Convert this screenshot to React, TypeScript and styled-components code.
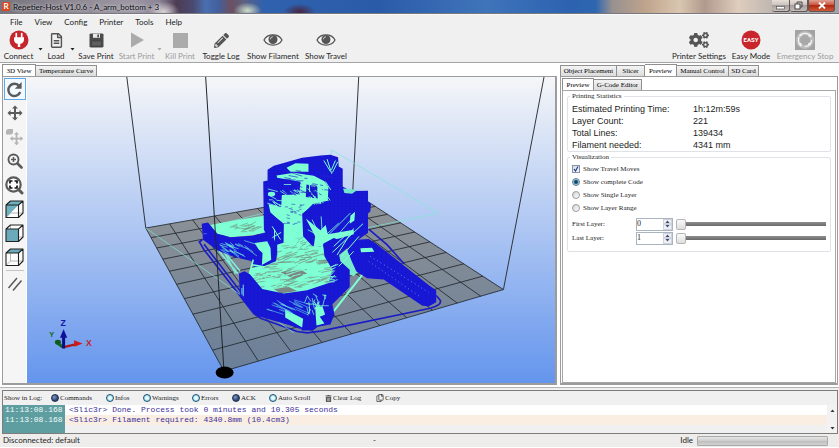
import React, { useState } from "react";
import styled, { createGlobalStyle, css } from "styled-components";
import { FaCogs, FaPencilAlt, FaRegFileAlt, FaTrashAlt, FaRegCopy } from "react-icons/fa";

const UI = `Lato, "Open Sans", sans-serif`;
const SERIF = `"Liberation Serif", serif`;

const GlobalStyle = createGlobalStyle`
  * { box-sizing: border-box; }
  body { margin: 0; background: #fff; font-family: ${UI}; font-size: 8px; line-height: 10px; color: #1c1c1c; }
  button, input { font: inherit; color: inherit; margin: 0; padding: 0; }
  button { background: none; border: 0; }
`;

const Window = styled.div`
  display: flex;
  flex-direction: column;
  min-height: 100vh;
  background: #f0f0f0;
  border-bottom: 2px solid #fff;
`;

/* ---------- title bar ---------- */

const TitleBar = styled.header`
  display: flex;
  align-items: center;
  height: 14px;
  padding-left: 2px;
  gap: 3px;
  border-bottom: 1px solid #77797f;
  background:
    radial-gradient(ellipse 14px 8px at 29.5% 80%, #d0dcc8, transparent),
    radial-gradient(ellipse 16px 8px at 35.7% 90%, #4a2440, transparent),
    radial-gradient(ellipse 16px 10px at 19.5% 90%, #d9d2d4, transparent),
    linear-gradient(90deg, #77747e 0, #8d8891 8%, #9c97a3 16%, #8b8496 19%, #4d3c54 21%, #4a4a70 23%, #4a6fb0 24.5%,
      #42609e 26%, #6b5060 27.5%, #5d6080 29%, #2f62ae 31.5%, #2a5ba8 45%, #3f74ba 58%, #2c62b0 68%, #2f66b0 71%,
      #98918f 73%, #c0a48c 77%, #d9c6b0 81%, #b09a8d 84%, #dfcdbd 88%, #b8b2ae 93%, #a3a3a8 100%);
`;

const AppBadge = styled.span`
  width: 8px;
  height: 9px;
  border-radius: 1px;
  background: #d9481f;
  color: #fff;
  font-weight: 700;
  line-height: 9px;
  text-align: center;
`;

const WindowTitle = styled.h1`
  flex: 1;
  margin: 0;
  font-size: 8px;
  font-weight: 400;
  line-height: 12px;
  color: #0b0b12;
  text-shadow: 0 0 3px #ffffffb0, 0 0 5px #ffffff80;
`;

const WindowButtons = styled.div`
  display: flex;
  align-self: flex-start;
  margin-right: 4px;
`;

const WindowButton = styled.button<{ $close?: boolean }>`
  display: flex;
  align-items: center;
  justify-content: center;
  width: ${(p) => (p.$close ? 27 : 18)}px;
  height: 12px;
  border: 1px solid #5c5658;
  border-top: 0;
  border-left-width: ${(p) => (p.$close ? 1 : 0)}px;
  border-radius: 0 0 3px 3px;
  background: ${(p) =>
    p.$close
      ? "linear-gradient(#e0a294, #c8543d 45%, #b02a14 50%, #cf5a35)"
      : "linear-gradient(#e8dfd8, #cdc3bd 45%, #a79f9d 50%, #c9bfb9)"};
`;

/* ---------- menu and toolbar ---------- */

const MenuBar = styled.nav`
  display: flex;
  align-items: center;
  height: 15px;
  padding-left: 10px;
  gap: 12px;
  border-top: 1px solid #fafafa;
`;

const MenuItem = styled.button`
  line-height: 12px;
`;

const Toolbar = styled.div`
  display: flex;
  height: 34px;
  padding: 0 4px 0 0;
  border-bottom: 1px solid #a5a5a5;
`;

const Spacer = styled.div`
  flex: 1;
`;

const Tool = styled.button<{ $w: number }>`
  display: flex;
  flex-direction: column;
  align-items: center;
  width: ${(p) => p.$w}px;
  color: #262626;
  white-space: nowrap;
  &:disabled { color: #9b9b9b; }
`;

const ToolIcon = styled.span`
  display: flex;
  align-items: center;
  justify-content: center;
  height: 22px;
  color: #555;
  button:disabled & { color: #ababab; }
`;

const ToolLabel = styled.span`
  line-height: 10px;
`;

const DropArrow = styled.button<{ $dim?: boolean }>`
  width: 6px;
  padding-top: 4px;
  color: ${(p) => (p.$dim ? "#aaa" : "#222")};
`;

/* ---------- main area ---------- */

const Main = styled.main`
  flex: 1;
  display: flex;
  gap: 3px;
  padding: 1px 1px 2px 2px;
  background: #fff;
  border-bottom: 1px solid #b4b4b4;
`;

const LeftPane = styled.section`
  flex: 2 1 0;
  display: flex;
  flex-direction: column;
  min-width: 0;
`;

const RightPane = styled.section`
  flex: 1 1 0;
  display: flex;
  flex-direction: column;
  min-width: 278px;
`;

const Tabs = styled.div`
  display: flex;
  align-items: flex-end;
  height: 12px;
`;

const Tab = styled.button<{ $on?: boolean; $w: number }>`
  width: ${(p) => p.$w}px;
  height: 11px;
  font-family: ${SERIF};
  font-size: 7px;
  line-height: 9px;
  white-space: nowrap;
  color: #000;
  border: 1px solid #8f8f8f;
  border-bottom: 0;
  background: linear-gradient(#f4f4f4, #dcdcdc);
  & + & { border-left: 0; }
  ${(p) =>
    p.$on &&
    css`
      height: 12px;
      line-height: 10px;
      background: #fff;
    `}
`;

const ViewFrame = styled.div`
  flex: 1;
  display: flex;
  min-height: 0;
  border: 1px solid #9c9c9c;
  border-width: 1px 2px 2px 1px;
`;

const SideTools = styled.div`
  display: flex;
  flex-direction: column;
  align-items: center;
  width: 24px;
  background: #f5f5f5;
  border-right: 1px solid #fff;
`;

const SideTool = styled.button<{ $on?: boolean }>`
  display: flex;
  align-items: center;
  justify-content: center;
  width: 22px;
  height: 22px;
  margin: 1px 0;
  color: #5a5a5a;
  border: 1px solid ${(p) => (p.$on ? "#62a8e8" : "transparent")};
  background: ${(p) => (p.$on ? "#f2f9ff" : "transparent")};
  &:disabled { color: #b4b4b4; }
`;

const SideRule = styled.hr`
  width: 18px;
  margin: 1px 0;
  border: 0;
  border-top: 1px solid #c4c4c4;
`;

const Viewport = styled.div`
  flex: 1;
  display: flex;
  min-width: 0;
  svg { flex: 1; min-width: 0; width: 100%; height: 100%; }
`;

const OuterPanel = styled.div`
  flex: 1;
  display: flex;
  flex-direction: column;
  padding: 1px 1px 0 1px;
  border: 1px solid #9c9c9c;
  border-bottom-width: 2px;
`;

const InnerPanel = styled.div`
  flex: 1;
  padding: 1px 4px;
  border: 1px solid #a6a6a6;
  font-family: ${SERIF};
  font-size: 7px;
`;

const Group = styled.fieldset<{ $pad?: number }>`
  margin: 0 0 1px;
  padding: 0 4px ${(p) => p.$pad ?? 0}px;
  border: 1px solid #dfe3e8;
  border-radius: 2px;
`;

const Legend = styled.legend`
  margin-left: -2px;
  padding: 0 2px;
  line-height: 9px;
`;

const Stats = styled.table`
  width: 100%;
  margin-top: 2px;
  border-collapse: collapse;
  font-family: "Liberation Sans", sans-serif;
  font-size: 9px;
  th, td { padding: 0; height: 12px; line-height: 11px; text-align: left; font-weight: 400; }
  th { width: 121px; }
`;

const Option = styled.label`
  display: flex;
  align-items: center;
  gap: 3px;
  height: 13px;
`;

const Check = styled.input`
  appearance: none;
  width: 8px;
  height: 8px;
  border: 1px solid #8a93a3;
  background: #e8edf4;
  &:checked {
    background: linear-gradient(135deg, #d5dbe6, #f4f7fb);
  }
`;

const CheckWrap = styled.span`
  display: grid;
  place-items: center;
  > * { grid-area: 1 / 1; }
  svg { pointer-events: none; }
`;

const Radio = styled.input`
  appearance: none;
  width: 8px;
  height: 8px;
  border: 1px solid #9b9b9b;
  border-radius: 50%;
  background: linear-gradient(135deg, #d2d2d2, #fff);
  &:checked {
    border-color: #5f7c90;
    background: radial-gradient(circle, #143c5c 0 1px, #3b87ab 2px, #d8e8f0 3px);
  }
`;

const Layers = styled.div`
  margin-top: 3px;
`;

const LayerRow = styled.div`
  display: flex;
  align-items: center;
  height: 14px;
`;

const LayerLabel = styled.label`
  width: 64px;
`;

const Spin = styled.span`
  display: flex;
  width: 37px;
  height: 13px;
  border: 1px solid #aab4c0;
  background: #fff;
`;

const SpinInput = styled.input`
  flex: 1;
  min-width: 0;
  border: 0;
  font-size: 8px;
  line-height: 10px;
  background: transparent;
  appearance: textfield;
  &::-webkit-inner-spin-button { appearance: none; }
`;

const SpinButtons = styled.span`
  display: flex;
  flex-direction: column;
  width: 9px;
`;

const SpinButton = styled.button`
  flex: 1;
  display: flex;
  align-items: center;
  justify-content: center;
  border: 1px solid #cfd4dc;
  background: #eef0f5;
`;

const Slider = styled.input`
  appearance: none;
  flex: 1;
  min-width: 0;
  height: 12px;
  margin-left: 3px;
  background: linear-gradient(#8e8e8e, #6a6a6a) center / 100% 4px no-repeat;
  &::-webkit-slider-thumb {
    appearance: none;
    width: 10px;
    height: 11px;
    border: 1px solid #b5b5b5;
    border-radius: 2px;
    background: linear-gradient(#fafafa, #dedede);
  }
`;

/* ---------- log and status ---------- */

const LogPanel = styled.section`
  margin: 2px 1px 0 2px;
  border: 1px solid #7d7d7d;
`;

const LogBar = styled.div`
  display: flex;
  align-items: center;
  height: 14px;
  padding-left: 1px;
  font-family: ${SERIF};
  font-size: 7px;
`;

const LogCell = styled.span<{ $w: number }>`
  width: ${(p) => p.$w}px;
  white-space: nowrap;
`;

const LogButton = styled.button<{ $w: number }>`
  display: flex;
  align-items: center;
  gap: 1px;
  width: ${(p) => p.$w}px;
  white-space: nowrap;
`;

const Dot = styled.span<{ $on?: boolean }>`
  width: 8px;
  height: 8px;
  border-radius: 50%;
  border: 1px solid ${(p) => (p.$on ? "#1b2a44" : "#1f4f6e")};
  background: ${(p) =>
    p.$on
      ? "radial-gradient(circle at 35% 35%, #7f9cc6, #2f4a7c 60%)"
      : "radial-gradient(circle, #f4feff 0 1px, #8ddcf4 3px)"};
`;

const LogBody = styled.div`
  display: flex;
`;

const LogTable = styled.table`
  flex: 1;
  border-collapse: collapse;
  font-family: "Liberation Mono", monospace;
  font-size: 8px;
  line-height: 10px;
  td { padding: 0 0 0 4px; height: 10px; color: #3c2f9a; background: #fff; }
  tr:nth-child(2) td { background: #faeee3; }
  tr:nth-child(3) td { height: 8px; background: #f0f0f0; }
  td:first-child, tr:nth-child(n) td:first-child { width: 62px; padding-left: 2px; color: #f2fbfb; background: #5f9ea0; }
`;

const ScrollTrack = styled.div`
  display: flex;
  flex-direction: column;
  justify-content: space-between;
  align-items: center;
  width: 10px;
  padding: 2px 0;
  background: #f2f2f2;
`;

const ScrollButton = styled.button`
  display: flex;
  height: 6px;
  align-items: center;
`;

const StatusBar = styled.footer`
  display: grid;
  grid-template-columns: 45fr auto 55fr;
  align-items: center;
  height: 13px;
  padding: 0 11px 0 3px;
  background: #efedec;
  line-height: 11px;
`;

const IdleBox = styled.div`
  display: flex;
  align-items: center;
  justify-content: flex-end;
  gap: 4px;
`;

const Progress = styled.div`
  width: 131px;
  height: 10px;
  border: 1px solid #a9a9a9;
  border-radius: 1px;
  background: linear-gradient(#e6e6e6, #cfcfcf 45%, #bdbdbd 50%, #d2d2d2);
`;

/* ---------- icons ---------- */

const Triangle = ({ up, color = "currentColor" }: { up?: boolean; color?: string }) => (
  <svg width="5" height="3" viewBox="0 0 5 3">
    <path d={up ? "M0.5 3h4L2.5 0.5z" : "M0.5 0h4L2.5 2.5z"} fill={color} />
  </svg>
);

const PlugIcon = () => (
  <svg width="20" height="20" viewBox="0 0 20 20">
    <circle cx="10" cy="10" r="9.5" fill="#c5262e" />
    <path d="M7.3 3.6v4M12.7 3.6v4" stroke="#fff" strokeWidth="1.7" strokeLinecap="round" />
    <path d="M5 7.2h10v2.2c0 2.6-1.6 4-3.8 4.4V17H8.8v-3.2C6.6 13.4 5 12 5 9.4z" fill="#fff" />
  </svg>
);

const FloppyIcon = () => (
  <svg width="15" height="15" viewBox="0 0 15 15">
    <path d="M1.5 0.5H13.5L14.5 1.5V13.5L13.5 14.5H1.5L0.5 13.5V1.5z" fill="#4b4b4b" />
    <path d="M4 0.8h7v4H4z" fill="#e9e9e9" />
    <path d="M8.3 1.4h1.7v2.8H8.3z" fill="#4b4b4b" />
    <path d="M2.5 8h10v5h-10z" fill="#5f5f5f" stroke="#3a3a3a" strokeWidth="0.6" />
  </svg>
);

const EyeIcon = () => (
  <svg width="20" height="14" viewBox="0 0 20 14">
    <path d="M1 7C4.5 0.2 15.5 0.2 19 7C15.5 13.8 4.5 13.8 1 7z" fill="#f4f4f4" stroke="#555" strokeWidth="1.3" />
    <circle cx="10" cy="6.5" r="4.5" fill="#555" />
    <path d="M7.4 6.3a2.7 2.7 0 0 1 2.5-2.6" fill="none" stroke="#ddd" strokeWidth="0.9" />
  </svg>
);

const EasyIcon = () => (
  <svg width="20" height="20" viewBox="0 0 20 20">
    <circle cx="10" cy="10" r="9.5" fill="#c9252c" />
    <text x="10" y="12.2" textAnchor="middle" fontFamily="Roboto, sans-serif" fontWeight="700" fontSize="6" fill="#fff">
      EASY
    </text>
  </svg>
);

const StopIcon = () => (
  <svg width="20" height="20" viewBox="0 0 20 20">
    <rect width="20" height="20" fill="#a3a3a3" />
    <circle cx="10" cy="10" r="9" fill="#bdbdbd" />
    <circle cx="10" cy="10" r="6.6" fill="none" stroke="#f4f4f4" strokeWidth="1.2" strokeDasharray="10.4 3.4" />
    <circle cx="10" cy="10" r="5" fill="#a8a8a8" />
    <path d="M14 3.2l3 2.8-3.4 1zM3 13.5l3.6-.4-.7 3.6zM3.6 5.5l3-2.5.2 3.5zM16.5 13.8l-3.4 2.6.2-3.7z" fill="#f4f4f4" />
  </svg>
);

const RotateIcon = () => (
  <svg width="17" height="17" viewBox="0 0 17 17">
    <path d="M13.3 5.2A6.1 6.1 0 1 0 14.2 11" fill="none" stroke="currentColor" strokeWidth="2.4" />
    <path d="M15.6 1v6.8H8.8z" fill="currentColor" />
  </svg>
);

const MOVE =
  "M8 0.5L11 3.5H9V7H12.5V5L15.5 8L12.5 11V9H9V12.5H11L8 15.5L5 12.5H7V9H3.5V11L0.5 8L3.5 5V7H7V3.5H5z";

const MoveIcon = () => (
  <svg width="16" height="16" viewBox="0 0 16 16">
    <path d={MOVE} fill="currentColor" />
  </svg>
);

const MoveObjectIcon = () => (
  <svg width="19" height="18" viewBox="0 0 19 18">
    <path d="M1 2.5L3 1h5v4L6.5 6.5H1z" fill="currentColor" />
    <path d={MOVE} fill="currentColor" transform="translate(4.5 3.5) scale(.88)" />
  </svg>
);

const ZoomIcon = () => (
  <svg width="16" height="16" viewBox="0 0 16 16">
    <circle cx="6.5" cy="6.5" r="5" fill="none" stroke="currentColor" strokeWidth="1.9" />
    <path d="M6.5 4v5M4 6.5h5" stroke="currentColor" strokeWidth="1.5" />
    <path d="M10.5 10.5L14.5 14.5" stroke="currentColor" strokeWidth="2.6" strokeLinecap="round" />
  </svg>
);

const FitIcon = () => (
  <svg width="19" height="19" viewBox="0 0 19 19">
    <circle cx="8.5" cy="8.5" r="7.2" fill="#fff" stroke="currentColor" strokeWidth="2.2" />
    <path d="M5 7.5V5h2.5M9.5 5H12v2.5M12 9.5V12H9.5M7.5 12H5V9.5" fill="none" stroke="#111" strokeWidth="1.7" />
    <path d="M14 14l3 3" stroke="currentColor" strokeWidth="3" strokeLinecap="round" />
  </svg>
);

const CubeIcon = ({ face }: { face: "cut" | "front" | "top" }) => (
  <svg width="19" height="19" viewBox="0 0 19 19" strokeLinejoin="round">
    <path d="M1 5L5.5 1H18V13L13.5 17.5H1z" fill="#fdfdfd" />
    <path d="M5.5 1V13H18M5.5 13L1 17.5" fill="none" stroke="#999" strokeWidth="0.7" />
    {face === "cut" && <path d="M1 5L5.5 1H18L13.5 5L1 17.5z" fill="#6fb0bf" />}
    {face === "front" && <path d="M1 5H13.5V17.5H1z" fill="#6aaabb" />}
    {face === "top" && <path d="M1 5L5.5 1H18L13.5 5z" fill="#6aaabb" />}
    <path d="M1 5H13.5V17.5H1zM1 5L5.5 1H18L13.5 5M18 1V13L13.5 17.5" fill="none" stroke="#222" strokeWidth="1.1" />
  </svg>
);

const ParallelIcon = () => (
  <svg width="16" height="16" viewBox="0 0 16 16">
    <path d="M1.5 12L10 2M6 14.5L14.5 4.5" stroke="currentColor" strokeWidth="1.5" />
  </svg>
);

/* ---------- 3D scene ---------- */

type P = [number, number];

const FRONT: P = [310, 905];
const LEFT: P = [75, 475];
const RIGHT: P = [1150, 660];
const BACK: P = [697, 366];

/* Projects a point of the unit bed onto the screen. */
const projectBed = (() => {
  const [x0, y0] = FRONT;
  const [x1, y1] = RIGHT;
  const [x2, y2] = BACK;
  const [x3, y3] = LEFT;
  const dx1 = x1 - x2, dx2 = x3 - x2, sx = x0 - x1 + x2 - x3;
  const dy1 = y1 - y2, dy2 = y3 - y2, sy = y0 - y1 + y2 - y3;
  const det = dx1 * dy2 - dx2 * dy1;
  const g = (sx * dy2 - dx2 * sy) / det;
  const h = (dx1 * sy - sx * dy1) / det;
  return (u: number, v: number): P => {
    const w = g * u + h * v + 1;
    return [
      ((x1 - x0 + g * x1) * u + (x3 - x0 + h * x3) * v + x0) / w,
      ((y1 - y0 + g * y1) * u + (y3 - y0 + h * y3) * v + y0) / w,
    ];
  };
})();

const seg = (a: P, b: P) => `M${a[0].toFixed(1)} ${a[1].toFixed(1)}L${b[0].toFixed(1)} ${b[1].toFixed(1)}`;

const gridPath = Array.from({ length: 11 }, (_, i) => i / 10)
  .map((t) => seg(projectBed(t, 0), projectBed(t, 1)) + seg(projectBed(0, t), projectBed(1, t)))
  .join("");

/* Scattered strokes inside a box, with a fixed seed so that every render is the same. */
const strokes = (seed: number, n: number, x: number, y: number, w: number, h: number, angle: number, spread: number, len: number) => {
  let s = seed;
  const rnd = () => {
    s = (s * 16807) % 2147483647;
    return s / 2147483647;
  };
  let d = "";
  for (let i = 0; i < n; i++) {
    const a = ((angle + (rnd() - 0.5) * spread) * Math.PI) / 180;
    const l = len * (0.4 + rnd());
    const px = x + rnd() * w;
    const py = y + rnd() * h;
    d += seg([px, py], [px + Math.cos(a) * l, py + Math.sin(a) * l]);
  }
  return d;
};

const TOWER =
  "M441 300L460 288L545 264L600 257L630 255L653 262L655 290L667 297V350L690 364L743 363V395L752 402L750 425L742 432V490L700 520L650 560H470L430 480L428 335L441 332z";
const BOWL = "M470 525L545 500L600 510L615 545L650 590L640 640L560 668L490 674L425 662L380 625L390 595L440 585L470 570z";
const ARM = "M243 462L262 458L290 492L330 503L395 498L440 488L462 510L470 545L466 575L430 590L400 592L392 574L340 562L290 542L247 510z";
const BODY =
  "M355 612L372 605L388 614L425 658L490 672L560 662L625 640L636 600L612 560L608 522L640 505L668 515L655 550L660 575L688 600V652L636 704L642 735L630 765L592 772L578 783H545L540 776L405 738L385 715L358 680z";
const BLOCK = "M545 432L580 405L640 397L743 380V490L690 500L650 520L600 530L575 528L548 500z";
const LEVER = "M690 512L745 508L765 520L930 650L948 662V698L925 711L905 708L790 630L740 626L708 606L694 575L680 540z";

const Scene = () => (
  <svg viewBox="-282 21 1587 921" preserveAspectRatio="xMidYMid slice" role="img" aria-label="3D print preview">
    <defs>
      <linearGradient id="sky" x1="0" y1="0" x2="0" y2="1">
        <stop offset="0" stopColor="#f5f6f8" />
        <stop offset="1" stopColor="#6495ed" />
      </linearGradient>
      <linearGradient id="bed" x1="0" y1="0" x2="0" y2="1">
        <stop offset="0" stopColor="#909395" />
        <stop offset="1" stopColor="#6a7f99" />
      </linearGradient>
      <pattern id="wall" width="12" height="9" patternUnits="userSpaceOnUse">
        <rect width="12" height="9" fill="#1a1ae0" />
        <path d="M0 2L6 6M6 1l6 4M2 8h5" stroke="#0d0da8" strokeWidth="1.5" />
      </pattern>
      <clipPath id="bowlClip"><path d={BOWL} /></clipPath>
      <clipPath id="towerClip"><path d={TOWER} /></clipPath>
      <clipPath id="armClip"><path d={ARM} /></clipPath>
      <clipPath id="bodyClip"><path d={BODY} /></clipPath>
      <clipPath id="blockClip"><path d={BLOCK} /></clipPath>
      <clipPath id="leverClip"><path d={LEVER} /></clipPath>
    </defs>
    <rect x="-282" y="21" width="1587" height="921" fill="url(#sky)" />
    <path d="M75 475L310 905L1150 660L697 366z" fill="url(#bed)" />
    <path d={gridPath} stroke="#20262c" strokeWidth="2.5" fill="none" />
    <path d="M18 21L75 475M715 21L697 366M1272 21L1150 660" stroke="#30343a" strokeWidth="3" />

    {/* skirt around the part */}
    <path
      d="M245 510L236 517L250 540L400 732L420 746L530 786L560 790L600 785L930 716Q966 706 960 692L948 678M852 583L800 525L745 478M250 524L408 728L540 776"
      fill="none"
      stroke="#1c1cc4"
      strokeWidth="5"
    />
    <g fill="none" stroke="#7fe9d6" strokeWidth="2">
      <path d="M75 475L330 655L520 790M633 310V240L955 430L690 485M290 465L430 430" />
      <path d="M295 545L352 612M302 535L358 604M310 545L345 612" strokeWidth="5" />
    </g>
    <path d="M640 570L690 530L720 600L700 620L650 600z" fill="#76ecca" />
    <path d="M738 600L640 725" stroke="#7fffd4" strokeWidth="6" />

    {/* rear plate of the left arm */}
    <path d="M268 466L340 452L430 438L440 486L395 497L330 503L290 492z" fill="#7fffd4" />
    <path d={strokes(5, 22, 320, 462, 80, 26, -10, 40, 26)} stroke="#6f9485" strokeWidth="1.8" />

    {/* tower */}
    <path d={TOWER} fill="url(#wall)" />
    <g clipPath="url(#towerClip)">
      <path d="M498 294L525 280L564 282V306H510z M468 317L520 309L580 318L612 334L624 352L622 393L578 402L552 428L556 560H488L490 462L450 430L444 403L482 412L484 376L536 374L540 336L470 324z" fill="#7fffd4" />
      <ellipse cx="453" cy="373" rx="11" ry="7" fill="#7fffd4" />
      <path d="M558 344L590 350L592 386L556 382z" fill="#1a1acd" />
      <path d="M430 440L450 428L488 465V520L455 505L432 480z" fill="url(#wall)" />
      <path d={strokes(11, 46, 440, 340, 160, 90, 25, 50, 26)} stroke="#7fffd4" strokeWidth="2.4" />
      <path d={strokes(29, 34, 480, 300, 130, 70, 15, 30, 24)} stroke="#2222cf" strokeWidth="2" />
      <path d={strokes(31, 24, 485, 400, 60, 70, 5, 30, 10)} stroke="#3556bd" strokeWidth="2" />
      <path d={strokes(17, 16, 565, 335, 55, 55, 80, 60, 30)} stroke="#7fffd4" strokeWidth="3" />
      <path d="M610 272L630 305M620 268L634 312M652 276L636 308M645 272L633 300M455 470L480 510M448 508L482 488M462 478V520" stroke="#7fffd4" strokeWidth="3" />
    </g>
    <path d="M668 356L712 360L695 372L672 370z" fill="#74e6cb" />

    {/* bowl floor */}
    <path d={BOWL} fill="#7fffd4" />
    <g clipPath="url(#bowlClip)">
      <path d={strokes(41, 110, 380, 545, 240, 110, -12, 24, 34)} stroke="#769384" strokeWidth="2.2" />
      <path d={strokes(43, 30, 470, 505, 140, 40, -20, 40, 22)} stroke="#66a08c" strokeWidth="1.8" />
      <path d="M480 608L540 600L560 612L520 628z M455 655L500 650L530 664L480 672z" fill="#7b8784" />
      <path d={strokes(47, 46, 390, 590, 210, 70, -10, 30, 44)} stroke="#7fffd4" strokeWidth="2.5" />
    </g>

    {/* left arm */}
    <path d={ARM} fill="url(#wall)" />
    <g clipPath="url(#armClip)">
      <path d="M402 520L440 515L450 535L452 570L424 586L426 550L415 540z" fill="#7fffd4" />
      <path d={strokes(53, 24, 296, 510, 90, 36, 28, 24, 32)} stroke="#6be6dc" strokeWidth="2" />
      <path d="M248 492h10" stroke="#4b6be0" strokeWidth="3" />
    </g>
    <path d="M398 570L385 620M392 585L430 592L388 612" stroke="#7fffd4" strokeWidth="5" fill="none" />

    {/* right block */}
    <path d={BLOCK} fill="url(#wall)" />
    <g clipPath="url(#blockClip)">
      <path d="M556 446L600 482L616 466L622 494L700 480V494L630 514L606 530H580L584 500z" fill="#7fffd4" />
      <path d="M690 438L704 426L702 452L688 462z" fill="#7fffd4" />
      <path d="M600 500L575 450M606 498L602 440M596 498L562 480M620 500L690 430M640 510L700 440M612 500L655 460" stroke="#7fffd4" strokeWidth="2.5" />
    </g>

    {/* lever */}
    <path d={LEVER} fill="url(#wall)" />
    <g clipPath="url(#leverClip)">
      <path d="M720 536L755 534L762 546L722 548z" fill="#7fffd4" />
      <path d="M750 560L925 668M745 575L900 682" stroke="#6fb0ea" strokeWidth="2.2" strokeDasharray="3 9" />
    </g>

    {/* front body */}
    <path d={BODY} fill="url(#wall)" />
    <g clipPath="url(#bodyClip)">
      <path d="M494 720L548 748L545 774L494 744z M584 712L606 710L614 735L598 742L612 762L588 768z" fill="#7fffd4" />
      <path d={strokes(61, 22, 430, 690, 100, 30, 24, 16, 40)} stroke="#5fd6e2" strokeWidth="1.8" />
      <path d={strokes(67, 26, 556, 672, 60, 50, 60, 120, 26)} stroke="#7fffd4" strokeWidth="2.2" />
      <path d="M368 645V680M364 655v20" stroke="#6fe0e6" strokeWidth="3" />
      <path d={strokes(71, 20, 610, 590, 24, 50, -30, 70, 22)} stroke="#7fffd4" strokeWidth="2.5" />
    </g>
    <path d="M636 548L728 462M650 556L700 476M664 560L716 500M640 530L672 500M655 590L700 545" stroke="#7fffd4" strokeWidth="3" />

    <path d="M255 21L310 905" stroke="#20242c" strokeWidth="3" />
    <ellipse cx="312" cy="909" rx="27" ry="18" fill="#000" />

    {/* axis gizmo */}
    <g transform="translate(-241 729)">
      <path d="M67 104L48 90" stroke="#0d6a20" strokeWidth="9" />
      <ellipse cx="52" cy="89" rx="9" ry="7" fill="#0f5c1c" />
      <path d="M69 104L108 95" stroke="#b01818" strokeWidth="7" />
      <path d="M100 83L126 93L102 103z" fill="#d01a1a" />
      <path d="M69 108V72" stroke="#0c0c86" strokeWidth="9" />
      <path d="M58 76L69 50L80 76z" fill="#10109a" />
      <g fontFamily="Liberation Sans, sans-serif" fontWeight="700">
        <text x="60" y="40" fontSize="26" fill="#1616a8">Z</text>
        <text x="136" y="100" fontSize="26" fill="#c81c1c">X</text>
        <text x="26" y="75" fontSize="22" fill="#0d6a20">Y</text>
      </g>
    </g>
  </svg>
);

/* ---------- page ---------- */

const layerModes = ["Show complete Code", "Show Single Layer", "Show Layer Range"];

const Layer = ({ id, label, first }: { id: string; label: string; first: number }) => {
  const [value, setValue] = useState(first);
  return (
    <LayerRow>
      <LayerLabel htmlFor={id}>{label}</LayerLabel>
      <Spin>
        <SpinInput id={id} type="number" min={first} value={value} onChange={(e) => setValue(Number(e.target.value))} />
        <SpinButtons>
          <SpinButton aria-label="Increase" onClick={() => setValue(value + 1)}><Triangle up color="#3d4a78" /></SpinButton>
          <SpinButton aria-label="Decrease" onClick={() => setValue(Math.max(first, value - 1))}><Triangle color="#3d4a78" /></SpinButton>
        </SpinButtons>
      </Spin>
      <Slider
        type="range"
        aria-label={label}
        min={first}
        max={221}
        value={value}
        onChange={(e) => setValue(Number(e.target.value))}
      />
    </LayerRow>
  );
};

export default function App() {
  const [travel, setTravel] = useState(true);
  const [mode, setMode] = useState(0);
  const [filters, setFilters] = useState([
    { name: "Commands", on: true, w: 55 },
    { name: "Infos", on: false, w: 37 },
    { name: "Warnings", on: false, w: 49 },
    { name: "Errors", on: false, w: 40 },
    { name: "ACK", on: true, w: 37 },
    { name: "Auto Scroll", on: false, w: 56 },
  ]);

  return (
    <>
      <GlobalStyle />
      <Window>
        <TitleBar>
          <AppBadge>R</AppBadge>
          <WindowTitle>Repetier-Host V1.0.6 - A_arm_bottom + 3</WindowTitle>
          <WindowButtons>
            <WindowButton aria-label="Minimize">
              <svg width="9" height="8" viewBox="0 0 9 8"><rect x="0.5" y="4.5" width="8" height="2.5" fill="#fff" stroke="#555" strokeWidth="0.7" /></svg>
            </WindowButton>
            <WindowButton aria-label="Restore">
              <svg width="9" height="9" viewBox="0 0 9 9" fill="none" stroke="#444"><path d="M3 2.5V1h5v5H6.5" /><rect x="1" y="3" width="5" height="5" fill="#fff" /></svg>
            </WindowButton>
            <WindowButton $close aria-label="Close">
              <svg width="8" height="7" viewBox="0 0 8 7"><path d="M1 0.5L7 6.5M7 0.5L1 6.5" stroke="#fff" strokeWidth="1.8" /></svg>
            </WindowButton>
          </WindowButtons>
        </TitleBar>

        <MenuBar>
          {["File", "View", "Config", "Printer", "Tools", "Help"].map((m) => (
            <MenuItem key={m}>{m}</MenuItem>
          ))}
        </MenuBar>

        <Toolbar>
          <Tool $w={37}><ToolIcon><PlugIcon /></ToolIcon><ToolLabel>Connect</ToolLabel></Tool>
          <DropArrow aria-label="Connect options"><Triangle /></DropArrow>
          <Tool $w={26}><ToolIcon><FaRegFileAlt size={15} /></ToolIcon><ToolLabel>Load</ToolLabel></Tool>
          <DropArrow aria-label="Load options"><Triangle /></DropArrow>
          <Tool $w={42}><ToolIcon><FloppyIcon /></ToolIcon><ToolLabel>Save Print</ToolLabel></Tool>
          <Tool $w={39} disabled>
            <ToolIcon><svg width="14" height="16" viewBox="0 0 14 16"><path d="M1 0.5L14 8L1 15.5z" fill="currentColor" /></svg></ToolIcon>
            <ToolLabel>Start Print</ToolLabel>
          </Tool>
          <DropArrow $dim disabled aria-label="Start options"><Triangle /></DropArrow>
          <Tool $w={36} disabled>
            <ToolIcon><svg width="15" height="15" viewBox="0 0 15 15"><rect width="15" height="15" fill="currentColor" /></svg></ToolIcon>
            <ToolLabel>Kill Print</ToolLabel>
          </Tool>
          <Tool $w={46}><ToolIcon><FaPencilAlt size={15} /></ToolIcon><ToolLabel>Toggle Log</ToolLabel></Tool>
          <Tool $w={58}><ToolIcon><EyeIcon /></ToolIcon><ToolLabel>Show Filament</ToolLabel></Tool>
          <Tool $w={48}><ToolIcon><EyeIcon /></ToolIcon><ToolLabel>Show Travel</ToolLabel></Tool>
          <Spacer />
          <Tool $w={56}><ToolIcon><FaCogs size={20} /></ToolIcon><ToolLabel>Printer Settings</ToolLabel></Tool>
          <Tool $w={48}><ToolIcon><EasyIcon /></ToolIcon><ToolLabel>Easy Mode</ToolLabel></Tool>
          <Tool $w={60} disabled><ToolIcon><StopIcon /></ToolIcon><ToolLabel>Emergency Stop</ToolLabel></Tool>
        </Toolbar>

        <Main>
          <LeftPane>
            <Tabs role="tablist">
              <Tab role="tab" aria-selected $on $w={34}>3D View</Tab>
              <Tab role="tab" aria-selected={false} $w={61}>Temperature Curve</Tab>
            </Tabs>
            <ViewFrame>
              <SideTools>
                <SideTool $on aria-label="Rotate"><RotateIcon /></SideTool>
                <SideTool aria-label="Move"><MoveIcon /></SideTool>
                <SideTool disabled aria-label="Move object"><MoveObjectIcon /></SideTool>
                <SideTool aria-label="Zoom"><ZoomIcon /></SideTool>
                <SideTool aria-label="Fit"><FitIcon /></SideTool>
                <SideTool aria-label="Isometric view"><CubeIcon face="cut" /></SideTool>
                <SideTool aria-label="Front view"><CubeIcon face="front" /></SideTool>
                <SideTool aria-label="Top view"><CubeIcon face="top" /></SideTool>
                <SideRule />
                <SideTool aria-label="Parallel projection"><ParallelIcon /></SideTool>
              </SideTools>
              <Viewport><Scene /></Viewport>
            </ViewFrame>
          </LeftPane>

          <RightPane>
            <Tabs role="tablist">
              <Tab role="tab" aria-selected={false} $w={57}>Object Placement</Tab>
              <Tab role="tab" aria-selected={false} $w={28}>Slicer</Tab>
              <Tab role="tab" aria-selected $on $w={32}>Preview</Tab>
              <Tab role="tab" aria-selected={false} $w={52}>Manual Control</Tab>
              <Tab role="tab" aria-selected={false} $w={30}>SD Card</Tab>
            </Tabs>
            <OuterPanel>
              <Tabs role="tablist">
                <Tab role="tab" aria-selected $on $w={32}>Preview</Tab>
                <Tab role="tab" aria-selected={false} $w={48}>G-Code Editor</Tab>
              </Tabs>
              <InnerPanel>
                <Group>
                  <Legend>Printing Statistics</Legend>
                  <Stats>
                    <tbody>
                      <tr><th scope="row">Estimated Printing Time:</th><td>1h:12m:59s</td></tr>
                      <tr><th scope="row">Layer Count:</th><td>221</td></tr>
                      <tr><th scope="row">Total Lines:</th><td>139434</td></tr>
                      <tr><th scope="row">Filament needed:</th><td>4341 mm</td></tr>
                    </tbody>
                  </Stats>
                </Group>
                <Group $pad={6}>
                  <Legend>Visualization</Legend>
                  <Option>
                    <CheckWrap>
                      <Check type="checkbox" checked={travel} onChange={(e) => setTravel(e.target.checked)} />
                      {travel && (
                        <svg width="6" height="6" viewBox="0 0 6 6"><path d="M1 3L2.5 5L5 0.5" fill="none" stroke="#223f8a" strokeWidth="1.2" /></svg>
                      )}
                    </CheckWrap>
                    Show Travel Moves
                  </Option>
                  {layerModes.map((m, i) => (
                    <Option key={m}>
                      <Radio type="radio" name="layers" checked={mode === i} onChange={() => setMode(i)} />
                      {m}
                    </Option>
                  ))}
                  <Layers>
                    <Layer id="first" label="First Layer:" first={0} />
                    <Layer id="last" label="Last Layer:" first={1} />
                  </Layers>
                </Group>
              </InnerPanel>
            </OuterPanel>
          </RightPane>
        </Main>

        <LogPanel>
          <LogBar>
            <LogCell $w={47}>Show in Log:</LogCell>
            {filters.map((f, i) => (
              <LogButton
                key={f.name}
                $w={f.w}
                aria-pressed={f.on}
                onClick={() => setFilters(filters.map((g, j) => (i === j ? { ...g, on: !g.on } : g)))}
              >
                <Dot $on={f.on} />
                {f.name}
              </LogButton>
            ))}
            <LogButton $w={51}><FaTrashAlt size={7} color="#555" />Clear Log</LogButton>
            <LogButton $w={40}><FaRegCopy size={8} color="#444" />Copy</LogButton>
          </LogBar>
          <LogBody>
            <LogTable>
              <tbody>
                <tr><td>11:13:08.168</td><td>&lt;Slic3r&gt; Done. Process took 0 minutes and 10.305 seconds</td></tr>
                <tr><td>11:13:08.168</td><td>&lt;Slic3r&gt; Filament required: 4340.8mm (10.4cm3)</td></tr>
                <tr><td /><td /></tr>
              </tbody>
            </LogTable>
            <ScrollTrack>
              <ScrollButton aria-label="Scroll up"><Triangle up color="#333" /></ScrollButton>
              <ScrollButton aria-label="Scroll down"><Triangle color="#333" /></ScrollButton>
            </ScrollTrack>
          </LogBody>
        </LogPanel>

        <StatusBar>
          <span>Disconnected: default</span>
          <span>-</span>
          <IdleBox>
            Idle
            <Progress role="progressbar" aria-label="Job progress" />
          </IdleBox>
        </StatusBar>
      </Window>
    </>
  );
}
